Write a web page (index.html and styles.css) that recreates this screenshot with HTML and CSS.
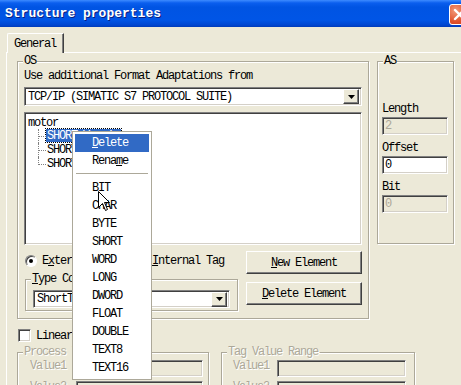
FILE: index.html
```html
<!DOCTYPE html>
<html lang="en">
<head>
    <meta charset="UTF-8">
    <title>Structure properties</title>
    <link rel="stylesheet" href="styles.css">
</head>
<body>
    <div class="titlebar">
        <span class="title">Structure properties</span>
        <span class="close">
            <svg width="13" height="13" viewBox="0 0 13 13"><path d="M2 2 L11 11 M11 2 L2 11" stroke="#fff" stroke-width="2.4" stroke-linecap="round"/></svg>
        </span>
    </div>

    <div class="tabs">
        <div class="tab">General</div>
    </div>

    <div class="panel">
        <div class="top-row">
            <div class="group os">
                <span class="legend">OS</span>
                <div class="caption">Use additional Format Adaptations from</div>
                <div class="combo">
                    <span class="combo-text">TCP/IP (SIMATIC S7 PROTOCOL SUITE)</span>
                    <span class="drop"><svg width="7" height="4" viewBox="0 0 7 4"><path d="M0 0 H7 L3.5 4 Z" fill="#000"/></svg></span>
                </div>
                <div class="tree">
                    <div class="node">motor</div>
                    <div class="child"><span class="branch"></span><span class="label selected">SHORT_Var_1</span></div>
                    <div class="child"><span class="branch"></span><span class="label">SHORT_Var_2</span></div>
                    <div class="child"><span class="branch"></span><span class="label">SHORT_Var_3</span></div>
                </div>
                <div class="os-bottom">
                    <div class="left-col">
                        <div class="radios">
                            <span class="radio"><span class="dot checked"></span>E<u>x</u>ternal Tag</span>
                            <span class="radio second"><span class="dot"></span><u>I</u>nternal Tag</span>
                        </div>
                        <div class="group conv">
                            <span class="legend"><u>T</u>ype Conversion</span>
                            <div class="combo small">
                                <span class="combo-text">ShortToSignedWord</span>
                                <span class="drop"><svg width="7" height="4" viewBox="0 0 7 4"><path d="M0 0 H7 L3.5 4 Z" fill="#000"/></svg></span>
                            </div>
                        </div>
                    </div>
                    <div class="right-col">
                        <button class="btn"><u>N</u>ew Element</button>
                        <button class="btn"><u>D</u>elete Element</button>
                    </div>
                </div>
            </div>

            <div class="group as">
                <span class="legend">AS</span>
                <div class="field-label">Length</div>
                <div class="input disabled">2</div>
                <div class="field-label">Offset</div>
                <div class="input">0</div>
                <div class="field-label">Bit</div>
                <div class="input disabled">0</div>
            </div>
        </div>

        <div class="check-row">
            <span class="checkbox"></span>Linear scaling
        </div>

        <div class="ranges">
            <div class="group range process">
                <span class="legend off">Process Value Range</span>
                <div class="range-row"><span class="range-label off">Value1</span><span class="input disabled range-input"></span></div>
                <div class="range-row"><span class="range-label off">Value2</span><span class="input disabled range-input"></span></div>
            </div>
            <div class="group range tagrange">
                <span class="legend off">Tag Value Range</span>
                <div class="range-row"><span class="range-label off">Value1</span><span class="input disabled range-input"></span></div>
                <div class="range-row"><span class="range-label off">Value2</span><span class="input disabled range-input"></span></div>
            </div>
        </div>
    </div>

    <!-- context menu of the tree -->
    <div class="menu">
        <div class="item active"><u>D</u>elete</div>
        <div class="item">Rena<u>m</u>e</div>
        <div class="sep"></div>
        <div class="item">BIT</div>
        <div class="item">CHAR</div>
        <div class="item">BYTE</div>
        <div class="item">SHORT</div>
        <div class="item">WORD</div>
        <div class="item">LONG</div>
        <div class="item">DWORD</div>
        <div class="item">FLOAT</div>
        <div class="item">DOUBLE</div>
        <div class="item">TEXT8</div>
        <div class="item">TEXT16</div>
    </div>

    <svg class="cursor" width="13" height="21" viewBox="0 0 13 21">
        <path d="M0.5 0.5 V16.5 L4.5 12.5 L7.5 19.5 L9.5 18.5 L6.5 11.5 H11.5 Z" fill="#fff" stroke="#000" stroke-width="1" stroke-linejoin="miter"/>
    </svg>
</body>
</html>
```

FILE: styles.css
```css
body {
    margin: 0;
    width: 461px;
    height: 385px;
    overflow: hidden;
    position: relative;
    background: #ECE9D8;
    font-family: "Liberation Mono", monospace;
    font-size: 12px;
    line-height: 12px;
    letter-spacing: -1.2px;
    color: #000;
}
u { text-underline-offset: 1px; }

/* title bar */
.titlebar {
    height: 27px;
    display: flex;
    align-items: flex-start;
    background: linear-gradient(#3D8BFF 0, #0A5EEE 3px, #0054E3 7px, #0055E6 20px, #0046D0 25px, #003BB8 27px);
}
.title {
    padding: 7px 0 0 5px;
    color: #fff;
    font-weight: bold;
    font-size: 13px;
    line-height: 14px;
    letter-spacing: 0;
    text-shadow: 1px 1px #0A1F80;
}
.close {
    margin: 4px -9px 0 auto;
    width: 21px;
    height: 21px;
    box-sizing: border-box;
    border: 1px solid #fff;
    border-radius: 3px;
    background: radial-gradient(circle at 30% 30%, #F29B7B, #E0512B 60%, #C6391A);
    display: flex;
    align-items: center;
    justify-content: center;
}

/* tab */
.tabs { display: flex; padding: 6px 0 0 7px; }
.tab {
    position: relative;
    z-index: 1;
    margin-bottom: -1px;
    width: 57px;
    height: 20px;
    box-sizing: border-box;
    padding: 4px 0 0 6px;
    background: #ECE9D8;
    border-top: 1px solid #fff;
    border-left: 1px solid #fff;
    border-right: 1px solid #404040;
    border-top-left-radius: 2px;
    box-shadow: inset -1px 0 #808080;
}
.panel {
    margin-left: 6px;
    border-top: 1px solid #fff;
    border-left: 1px solid #fff;
    padding: 8px 0 0 10px;
}

/* group boxes */
.top-row { display: flex; gap: 8px; align-items: flex-start; }
.group {
    position: relative;
    box-sizing: border-box;
    border: 1px solid #ACA899;
    box-shadow: inset 1px 1px #fff, 1px 1px #fff;
}
.legend {
    position: absolute;
    top: -7px;
    left: 5px;
    padding: 0 1px;
    background: #ECE9D8;
}
.off { color: #ACA899; text-shadow: 1px 1px #fff; }

.os { width: 352px; padding: 7px 6px 7px 6px; }
.caption { height: 12px; line-height: 14px; }

/* sunken controls */
.combo, .tree, .input, .checkbox {
    box-sizing: border-box;
    border: 1px solid;
    border-color: #808080 #fff #fff #808080;
    box-shadow: inset 1px 1px #404040, inset -1px -1px #D4D0C8;
    background: #fff;
}
.combo {
    margin-top: 6px;
    height: 19px;
    display: flex;
    align-items: center;
    padding: 2px 2px 2px 3px;
}
.combo-text { flex: 1; white-space: nowrap; overflow: hidden; }
.drop {
    width: 16px;
    height: 15px;
    box-sizing: border-box;
    background: #ECE9D8;
    border: 1px solid;
    border-color: #fff #404040 #404040 #fff;
    box-shadow: inset -1px -1px #808080;
    display: flex;
    align-items: center;
    justify-content: center;
}

.tree {
    margin-top: 6px;
    height: 133px;
    padding: 2px 2px 0 2px;
}
.node { height: 14px; line-height: 16px; padding-left: 1px; }
.child { display: flex; height: 14px; padding-left: 11px; }
.branch {
    position: relative;
    width: 8px;
    box-sizing: border-box;
    border-left: 1px dotted #808080;
}
.branch::after {
    content: "";
    position: absolute;
    left: 0;
    top: 7px;
    width: 7px;
    border-top: 1px dotted #808080;
}
.child:last-child .branch { height: 8px; }
.label {
    height: 13px;
    line-height: 14px;
    padding: 0 1px;
    white-space: nowrap;
}
.selected {
    width: 75px;
    box-sizing: border-box;
    background: #316AC5;
    color: #fff;
    outline: 1px dotted #000;
}

/* lower part of OS */
.os-bottom {
    display: flex;
    justify-content: space-between;
    margin-top: 6px;
}
.left-col { width: 214px; }
.radios { display: flex; margin-top: 4px; height: 12px; align-items: center; }
.radio { display: flex; align-items: center; white-space: nowrap; line-height: 14px; }
.radio.second { margin-left: 20px; }
.dot {
    width: 12px;
    height: 12px;
    box-sizing: border-box;
    margin: 0 5px 0 1px;
    border-radius: 50%;
    background: #fff;
    border: 1px solid;
    border-color: #808080 #fff #fff #808080;
    box-shadow: inset 1px 1px #404040;
    display: flex;
    align-items: center;
    justify-content: center;
}
.dot.checked::after {
    content: "";
    width: 4px;
    height: 4px;
    border-radius: 50%;
    background: #000;
}
.conv {
    margin: 12px 0 0 1px;
    width: 213px;
    height: 32px;
    padding: 10px 7px 0 7px;
}
.combo.small { margin-top: 0; height: 18px; padding-top: 1px; padding-bottom: 1px; }
.right-col {
    width: 116px;
    display: flex;
    flex-direction: column;
    gap: 8px;
}
.btn {
    height: 23px;
    font: inherit;
    letter-spacing: inherit;
    color: #000;
    background: #ECE9D8;
    border: 1px solid;
    border-color: #fff #404040 #404040 #fff;
    box-shadow: inset -1px -1px #808080;
    padding: 0;
}

/* AS */
.as { width: 77px; height: 183px; padding: 40px 0 0 4px; }
.field-label { height: 12px; line-height: 15px; }
.input {
    margin: 3px 0 6px;
    width: 66px;
    height: 18px;
    padding: 2px 0 0 2px;
    line-height: 13px;
}
.input.disabled { background: #ECE9D8; color: #ACA899; }

/* checkbox and ranges */
.check-row {
    display: flex;
    align-items: center;
    margin-top: 10px;
    height: 13px;
    white-space: nowrap;
}
.checkbox {
    width: 13px;
    height: 13px;
    margin: 0 5px 0 1px;
}
.ranges { display: flex; gap: 12px; margin-top: 10px; }
.range { height: 60px; padding-top: 7px; }
.process { width: 192px; padding-left: 12px; }
.tagrange { width: 194px; padding-left: 11px; }
.range-row { display: flex; margin-bottom: 4px; }
.process .range-label { width: 46px; }
.tagrange .range-label { width: 44px; }
.range-input { margin: 0; height: 17px; }
.process .range-input { width: 127px; }
.tagrange .range-input { width: 129px; }

/* context menu */
.menu {
    position: absolute;
    left: 72px;
    top: 131px;
    width: 80px;
    box-sizing: border-box;
    padding: 2px;
    background: #fff;
    border: 1px solid #ACA899;
}
.item {
    height: 18px;
    line-height: 19px;
    padding-left: 17px;
}
.item.active { background: #316AC5; color: #fff; }
.sep {
    height: 9px;
    position: relative;
}
.sep::after {
    content: "";
    position: absolute;
    left: 1px;
    right: 1px;
    top: 3px;
    border-top: 1px solid #ACA899;
}
.cursor {
    position: absolute;
    left: 98px;
    top: 191px;
}
```
